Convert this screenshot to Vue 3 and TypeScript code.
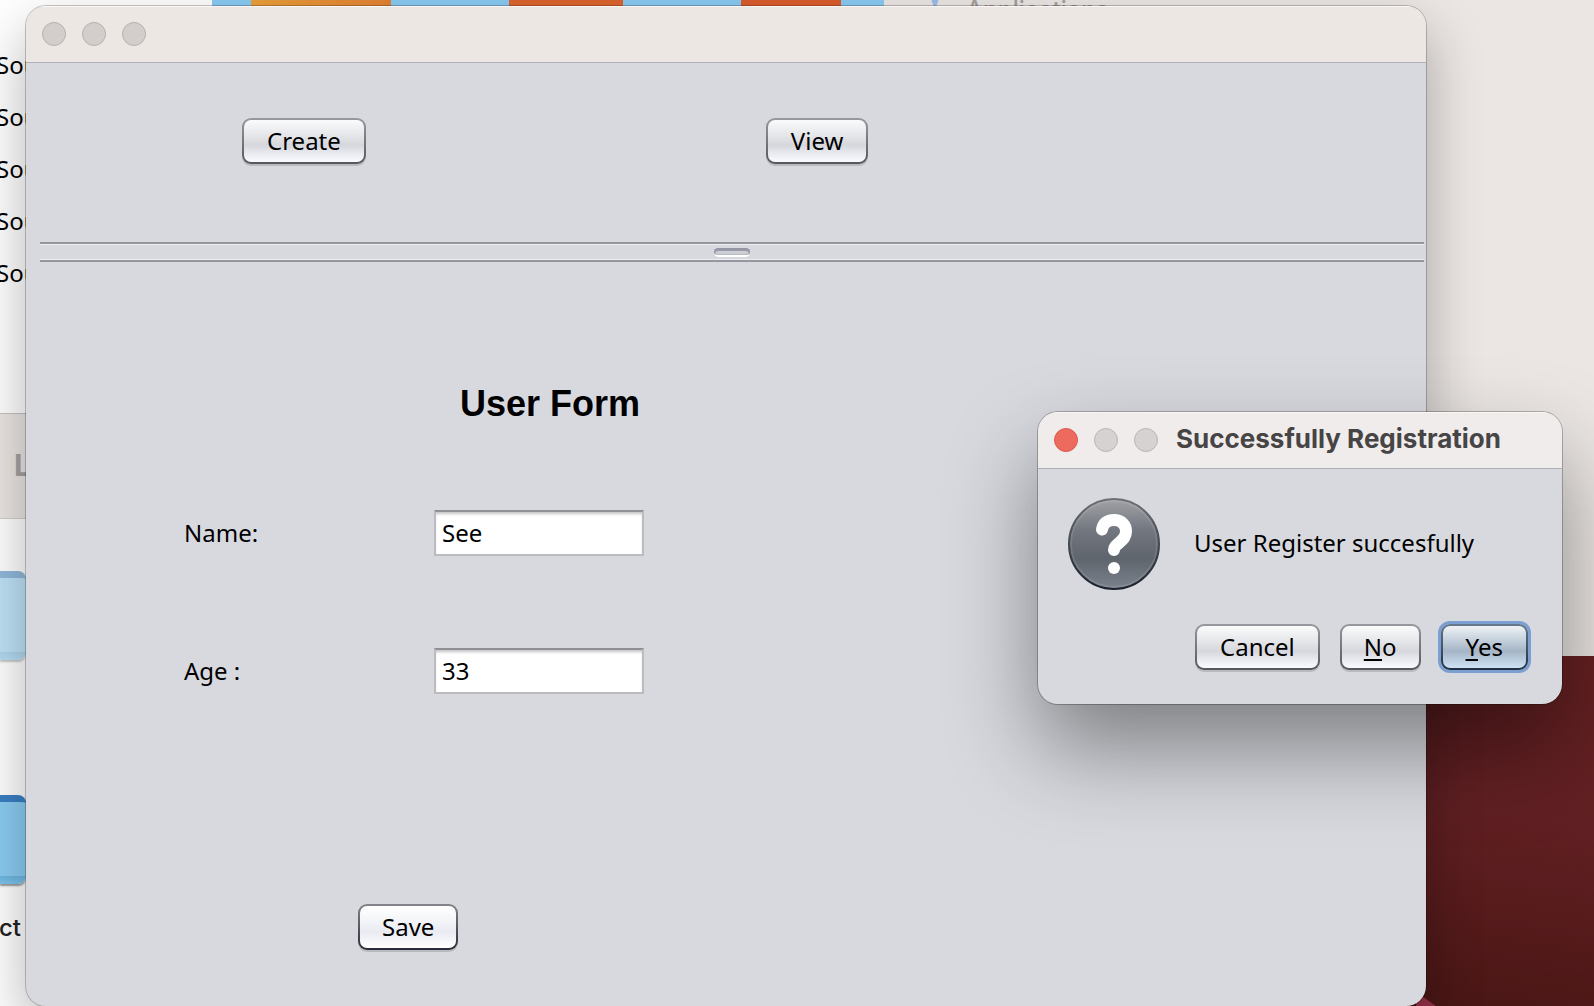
<script setup lang="ts">
import { ref } from 'vue'

const name = ref('See')
const age = ref('33')
const sources: string[] = ['Sou', 'Sou', 'Sou', 'Sou', 'Sou']
</script>

<template>
  <div class="desktop">
    <div class="wallpaper">
      <svg class="ridge" viewBox="0 0 20 14" aria-hidden="true">
        <path d="M0 0 L20 14 L0 14 Z" fill="#963049" />
      </svg>
    </div>

    <div class="finder">
      <div class="finder-list">
        <ul>
          <li v-for="(s, i) in sources" :key="i">{{ s }}</li>
        </ul>
      </div>
      <div class="finder-title">L</div>
      <div class="finder-icons">
        <div class="folder faded"></div>
        <div class="folder"></div>
        <span class="caption">ct</span>
      </div>
    </div>

    <div class="banner">
      <span class="stripe amber"></span>
      <span class="stripe rust"></span>
      <span class="stripe red"></span>
    </div>
    <div class="sidebar-item">
      <svg viewBox="0 0 10 10" aria-hidden="true">
        <path d="M1 0 L9 0 L8 5 L6 10 L4 10 L2 5 Z" fill="#9dbdea" />
      </svg>
      <span>Applications</span>
    </div>

    <main class="window main-window">
      <header class="titlebar">
        <button class="light" type="button" aria-label="Close"></button>
        <button class="light" type="button" aria-label="Minimize"></button>
        <button class="light" type="button" aria-label="Zoom"></button>
      </header>
      <nav class="toolbar">
        <button class="btn" type="button">Create</button>
        <button class="btn" type="button">View</button>
      </nav>
      <div class="divider"><span class="grip"></span></div>
      <form class="form" @submit.prevent>
        <h1>User Form</h1>
        <div class="field">
          <label for="name">Name:</label>
          <input id="name" v-model="name" type="text" />
        </div>
        <div class="field">
          <label for="age">Age :</label>
          <input id="age" v-model="age" type="text" />
        </div>
        <button class="btn tight save" type="submit">Save</button>
      </form>
    </main>

    <section class="window dialog" role="dialog" aria-labelledby="dialog-title">
      <header class="titlebar">
        <button class="light close" type="button" aria-label="Close"></button>
        <button class="light" type="button" aria-label="Minimize"></button>
        <button class="light" type="button" aria-label="Zoom"></button>
        <h2 id="dialog-title">Successfully Registration</h2>
      </header>
      <div class="message">
        <svg class="question" viewBox="0 0 92 92" aria-hidden="true">
          <defs>
            <linearGradient id="q-fill" x1="0" y1="0" x2="0" y2="1">
              <stop offset="0" stop-color="#a0a2a5" />
              <stop offset="0.35" stop-color="#72767f" />
              <stop offset="0.66" stop-color="#5f656d" />
              <stop offset="1" stop-color="#7b828c" />
            </linearGradient>
            <linearGradient id="q-rim" x1="0" y1="0" x2="0" y2="1">
              <stop offset="0" stop-color="#6c6f73" />
              <stop offset="1" stop-color="#1c222d" />
            </linearGradient>
          </defs>
          <circle cx="46" cy="46" r="45" fill="url(#q-fill)" stroke="url(#q-rim)" stroke-width="2" />
          <circle cx="46" cy="46" r="43" fill="none" stroke="#fff" stroke-opacity="0.1" stroke-width="2" />
          <path
            d="M34 31.500 C35 25.500 39 22 46 22 C53.500 22 58 27 58 33.500 C58 38.500 55.500 41 51.500 44.500 C48 47.500 46 49 46 52"
            fill="none" stroke="#fff" stroke-width="12" stroke-linecap="round" stroke-linejoin="round" />
          <circle cx="46" cy="70" r="6" fill="#fff" />
        </svg>
        <p>User Register succesfully</p>
      </div>
      <footer class="actions">
        <button class="btn" type="button">Cancel</button>
        <button class="btn tight" type="button"><u>N</u>o</button>
        <button class="btn default" type="button"><u>Y</u>es</button>
      </footer>
    </section>
  </div>
</template>

<style>
body {
  margin: 0;
}
</style>

<style scoped>
* {
  box-sizing: border-box;
}

.desktop {
  position: relative;
  min-height: 100vh;
  overflow: hidden;
  background: #ebe6e3;
  color: #000;
  font: 24px/32px "Noto Sans", "Open Sans", sans-serif;
}

.wallpaper {
  position: absolute;
  top: 656px;
  right: 0;
  bottom: 0;
  width: 190px;
  background: linear-gradient(190deg, #662022 0%, #612023 45%, #571b1c 70%, #481614 100%);
}

.ridge {
  position: absolute;
  left: 12px;
  bottom: 0;
  width: 20px;
  height: 14px;
}

.finder {
  position: absolute;
  inset: 0 auto 0 0;
  width: 212px;
  background: #fff;
}

.finder-list {
  height: 413px;
  padding-top: 49px;
}

.finder-list ul {
  margin: 0 0 0 -4px;
  padding: 0;
  list-style: none;
}

.finder-list li {
  height: 52px;
}

.finder-title {
  height: 106px;
  padding: 33px 0 0 14px;
  border-top: 1px solid #c4c2c2;
  border-bottom: 1px solid #d2cfcd;
  background: #ebe6e3;
  color: #a5a2a1;
  font: 700 30px/36px Inter, sans-serif;
}

.finder-icons {
  width: 26px;
  padding-top: 52px;
}

.folder {
  height: 89px;
  margin-bottom: 135px;
  border-top: 7px solid #3a80c3;
  border-radius: 0 8px 8px 0;
  background: linear-gradient(#8bcdf3 90%, #6cb6e2 90%, #7fc5ee);
  box-shadow: 0 2px 2px #999;
}

.folder.faded {
  opacity: 0.55;
}

.folder + .caption {
  display: block;
  margin: -107px 0 0 -1px;
  font: 500 24px/32px Inter, sans-serif;
  color: #222;
}

.banner {
  position: absolute;
  top: 0;
  left: 212px;
  display: flex;
  width: 672px;
  height: 30px;
  padding-left: 39px;
  background: #88caf3;
}

.stripe {
  width: 114px;
  margin-right: 118px;
}

.stripe.amber {
  width: 140px;
  background: linear-gradient(90deg, #eba03a, #e38133);
}

.stripe.rust {
  background: #dd652e;
}

.stripe.red {
  width: 100px;
  margin-right: 0;
  background: #db5c2d;
}

.sidebar-item {
  position: absolute;
  top: -6px;
  left: 930px;
  display: flex;
  gap: 26px;
  color: #a5a09e;
  font: 500 24px/32px Inter, sans-serif;
}

.sidebar-item svg {
  width: 10px;
  height: 10px;
  margin-top: 3px;
}

.window {
  position: absolute;
  overflow: hidden;
  border-radius: 20px;
  background: #d8d9df;
}

.main-window {
  inset: 6px 168px 0 26px;
  display: flex;
  flex-direction: column;
  box-shadow: 0 0 0 1px rgba(0, 0, 0, 0.22), 0 24px 56px rgba(0, 0, 0, 0.3);
}

.titlebar {
  display: flex;
  flex: none;
  align-items: center;
  gap: 16px;
  height: 57px;
  padding: 0 16px 2px;
  border-top: 1px solid #faf7f6;
  border-bottom: 1px solid #adb1b7;
  background: #ede7e4;
}

.light {
  width: 24px;
  height: 24px;
  padding: 0;
  border: 1px solid #b6b1af;
  border-radius: 50%;
  background: #d3cecb;
}

.toolbar {
  display: flex;
  flex: none;
  align-items: flex-start;
  gap: 400px;
  height: 179px;
  padding: 55px 0 0 216px;
}

.btn {
  position: relative;
  height: 46px;
  padding: 0 23px 1px;
  border: 2px solid transparent;
  border-radius: 9px;
  background:
    linear-gradient(#fafbfb, #e6e7ea 35%, #d6d7dc 60%, #e4e6ec 75%, #fafbff) padding-box,
    linear-gradient(#969a9e, #54565c) border-box;
  box-shadow: 0 2px 0 #b9bac0;
  color: #000;
  font: inherit;
}

.btn.tight {
  padding: 0 22px 1px;
}

.divider {
  display: flex;
  flex: none;
  align-items: center;
  justify-content: center;
  height: 20px;
  margin: 0 2px 0 14px;
  background: linear-gradient(
    #9496a0 2px,
    #eeeff3 2px 3px,
    #d8d9df 3px 17px,
    #eeeff3 17px 18px,
    #9496a0 18px
  );
}

.grip {
  width: 36px;
  height: 9px;
  border-bottom: 2px solid #fff;
  border-radius: 5px;
  background: linear-gradient(#e4e5ea, #c2c4cc);
  box-shadow: inset 0 3px 1px #9496a4, inset 1px 0 1px #9496a4, inset -1px 0 1px #9496a4;
}

.form {
  flex: 1;
  padding: 121px 0 0 158px;
}

.form h1 {
  margin: 0 0 85px 276px;
  font: 700 36px/42px "Liberation Sans", Arial, sans-serif;
}

.field {
  display: flex;
  align-items: center;
  height: 46px;
  margin-bottom: 92px;
}

.field label {
  width: 250px;
}

.field input {
  width: 210px;
  height: 46px;
  padding: 0 6px 2px;
  border: 2px solid #bcbcbe;
  border-top-color: #8f8f94;
  border-radius: 0;
  outline: none;
  background: #fff;
  box-shadow: inset 0 3px 3px -1px #c4c4c6;
  color: #000;
  font: inherit;
}

.save {
  display: block;
  margin: 210px 0 0 174px;
  background:
    linear-gradient(#fff, #f4f5f9 35%, #e9ebf2 62%, #fff) padding-box,
    linear-gradient(#85868b, #262b38) border-box;
}

.dialog {
  top: 412px;
  right: 32px;
  width: 524px;
  padding-bottom: 34px;
  box-shadow: 0 0 0 1px rgba(0, 0, 0, 0.25), 0 44px 90px rgba(0, 0, 0, 0.42);
}

.dialog .titlebar {
  background: #f0ecec;
}

.dialog .light {
  border-color: #bbb6b6;
  background: #d7d2d2;
}

.dialog .light.close {
  border-color: #db5a4e;
  background: #ed6a5e;
}

.dialog h2 {
  margin: 0;
  padding: 0 0 2px 2px;
  color: #464445;
  font: 700 26px/32px Inter, sans-serif;
  white-space: nowrap;
}

.message {
  display: flex;
  align-items: center;
  gap: 34px;
  padding: 29px 30px 34px;
}

.question {
  flex: none;
  width: 92px;
  height: 92px;
}

.message p {
  margin: 0;
  padding-bottom: 2px;
  white-space: nowrap;
}

.actions {
  display: flex;
  justify-content: flex-end;
  gap: 20px;
  padding-right: 34px;
}

.actions u {
  text-decoration-thickness: 2px;
  text-underline-offset: 3px;
}

.btn.default {
  background:
    linear-gradient(#eef2f6, #c3cfdb 35%, #a5b5c6 60%, #b4c6d8 75%, #cfe2f5) padding-box,
    linear-gradient(#66788c, #203040) border-box;
  box-shadow: 0 0 0 3px #7b9fd0;
}
</style>
